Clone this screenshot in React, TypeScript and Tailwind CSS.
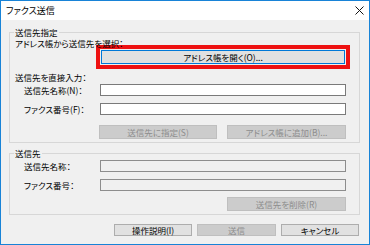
import React from "react";

const font = {
  fontFamily: '"Noto Sans CJK JP", "Noto Sans", sans-serif',
};

type BtnProps = {
  label: string;
  width: string;
  disabled?: boolean;
  height?: string;
};

const Btn = ({ label, width, disabled, height = "h-[14px]" }: BtnProps) => (
  <div
    className={`${width} ${height} flex items-center justify-center border ${
      disabled
        ? "bg-[#cccccc] border-[#bfbfbf] text-[#8c8c8c]"
        : "bg-[#e1e1e1] border-[#adadad] text-black"
    }`}
  >
    {label}
  </div>
);

const Field = ({ label, readOnly }: { label: string; readOnly?: boolean }) => (
  <div className="flex h-[12px] items-center">
    <div className="w-[85px] pl-[9px] leading-none">{label}</div>
    <div
      className={`w-[246px] h-[12px] border ${
        readOnly ? "bg-[#f0f0f0] border-[#8d8d8d]" : "bg-white border-[#7a7a7a]"
      }`}
    />
  </div>
);

const GroupBox = ({
  title,
  children,
}: {
  title: string;
  children: React.ReactNode;
}) => (
  <div className="relative mx-[8px] mr-[9px] border border-[#d7d7d7] pl-[5px] pb-[3px]">
    <span className="absolute left-[4px] top-[-5px] bg-[#f0f0f0] px-[1px] leading-[8px]">
      {title}
    </span>
    {children}
  </div>
);

export default function App() {
  return (
    <div
      className="w-[370px] h-[245px] flex flex-col border border-[#1883d7] bg-[#f0f0f0] text-[8.5px] text-black [font-feature-settings:'palt']"
      style={font}
    >
      <div className="h-[19px] shrink-0 bg-white flex items-center justify-between pl-[5px] pr-[5px]">
        <span className="text-[9px] leading-none">ファクス送信</span>
        <svg width="9" height="9" viewBox="0 0 9 9">
          <path d="M0.5 0.5 L8.5 8.5 M8.5 0.5 L0.5 8.5" stroke="#111" strokeWidth="1" />
        </svg>
      </div>

      <div className="mt-[12px]">
        <GroupBox title="送信先指定">
          <div className="pt-[6px] h-[14px] flex items-center leading-[8px]">
            アドレス帳から送信先を選択：
          </div>
          <div className="mt-[-2px] ml-[81px] w-[254px] h-[24px] border-[4px] border-[#ee1111] p-[1px] bg-[#f0f0f0]">
            <div className="h-full border border-[#0078d7] bg-[#e1e1e1] flex items-center justify-center">
              アドレス帳を開く(O)...
            </div>
          </div>
          <div className="mt-[3px] h-[10px] flex items-center leading-none">
            送信先を直接入力：
          </div>
          <div className="mt-[2px]">
            <Field label="送信先名称(N)：" />
          </div>
          <div className="mt-[7px]">
            <Field label="ファクス番号(F)：" />
          </div>
          <div className="mt-[10px] ml-[84px] flex gap-[10px]">
            <Btn label="送信先に指定(S)" width="w-[118px]" disabled />
            <Btn label="アドレス帳に追加(B)..." width="w-[119px]" disabled />
          </div>
        </GroupBox>
      </div>

      <div className="mt-[10px]">
        <GroupBox title="送信先">
          <div className="mt-[6px]">
            <Field label="送信先名称：" readOnly />
          </div>
          <div className="mt-[7px]">
            <Field label="ファクス番号：" readOnly />
          </div>
          <div className="mt-[6px] ml-[212px]">
            <Btn label="送信先を削除(R)" width="w-[119px]" disabled />
          </div>
        </GroupBox>
      </div>

      <div className="mt-[9px] mr-[10px] flex justify-end gap-[5px]">
        <Btn label="操作説明(I)" width="w-[78px]" height="h-[12px]" />
        <Btn label="送信" width="w-[79px]" height="h-[12px]" disabled />
        <Btn label="キャンセル" width="w-[78px]" height="h-[12px]" />
      </div>
    </div>
  );
}
